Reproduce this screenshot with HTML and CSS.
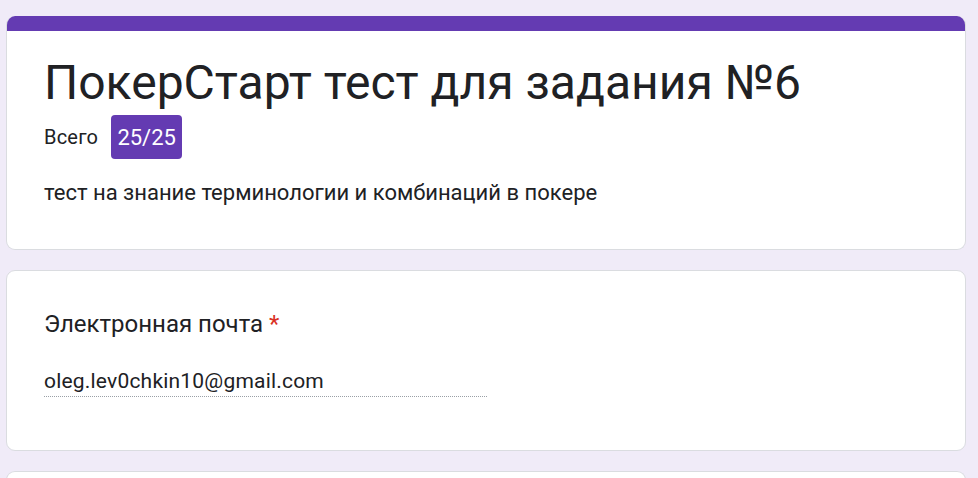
FILE: index.html
```html
<!DOCTYPE html>
<html lang="ru">
<head>
<meta charset="utf-8">
<link rel="stylesheet" href="styles.css">
</head>
<body>
<main class="page">
  <section class="card header-card">
    <div class="top-bar"></div>
    <div class="card-body header-body">
      <h1 class="title">ПокерСтарт тест для задания №6</h1>
      <div class="score-row">
        <span class="score-label">Всего</span>
        <span class="badge">25/25</span>
      </div>
      <p class="desc">тест на знание терминологии и комбинаций в покере</p>
    </div>
  </section>
  <section class="card">
    <div class="card-body question-body">
      <div class="q-label">Электронная почта <span class="req">*</span></div>
      <div class="answer">oleg.lev0chkin10@gmail.com</div>
    </div>
  </section>
  <section class="card stub"></section>
</main>
</body>
</html>
```
FILE: styles.css
```css
html, body {
  margin: 0;
  padding: 0;
  background: #f0ebf8;
}
body {
  font-family: Roboto, "Noto Sans", Arial, sans-serif;
  color: #202124;
  overflow: hidden;
  height: 478px;
}
.page {
  display: flex;
  flex-direction: column;
  gap: 20px;
  padding: 16px 12px 0 6px;
}
.card {
  background: #fff;
  border: 1px solid #dadce0;
  border-radius: 9px;
  overflow: hidden;
}
.header-card {
  border-top: none;
}
.top-bar {
  height: 15px;
  background: #643bb2;
}
.card-body {
  padding: 0 37px;
}
.header-body {
  padding-top: 20px;
  padding-bottom: 42px;
}
.title {
  margin: 0;
  font-size: 48px;
  font-weight: 400;
  line-height: 64px;
  letter-spacing: 0;
}
.score-row {
  display: flex;
  align-items: center;
  gap: 13px;
}
.score-label {
  font-size: 20px;
  letter-spacing: 0.2px;
}
.badge {
  display: inline-flex;
  align-items: center;
  justify-content: center;
  width: 71px;
  height: 44px;
  border-radius: 4px;
  background: #643bb2;
  color: #fff;
  font-size: 22px;
}
.desc {
  margin: 20px 0 0;
  font-size: 22px;
  line-height: 28px;
}
.question-body {
  padding-top: 38px;
  padding-bottom: 53px;
}
.q-label {
  font-size: 24px;
  line-height: 30px;
}
.req {
  color: #d93025;
}
.answer {
  margin-top: 29px;
  width: 443px;
  font-size: 21px;
  line-height: 26px;
  letter-spacing: 0.2px;
  border-bottom: 1px dotted #9aa0a6;
  padding-bottom: 2px;
}
.stub {
  height: 40px;
  border-bottom: none;
  border-bottom-left-radius: 0;
  border-bottom-right-radius: 0;
}
```
